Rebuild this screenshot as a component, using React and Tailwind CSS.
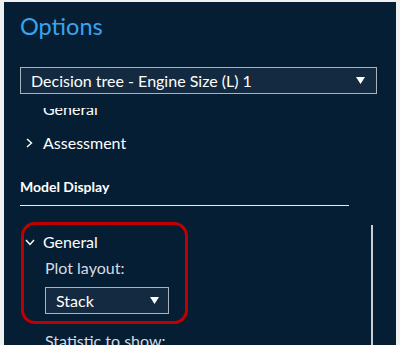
import React from "react";

const Caret = ({ className = "" }) => (
  <svg width="9" height="7" viewBox="0 0 9 7" className={className}>
    <path d="M0 0 H9 L4.5 7 Z" fill="#ffffff" />
  </svg>
);

const Chevron = ({ open }) => (
  <svg width="10" height="10" viewBox="0 0 10 10" className="shrink-0">
    <path
      d={open ? "M1 3 L5 7.5 L9 3" : "M3 1 L7.5 5 L3 9"}
      fill="none"
      stroke="#ffffff"
      strokeWidth="1.4"
    />
  </svg>
);

const Select = ({ label, className = "" }) => (
  <div
    className={`flex items-center justify-between border border-[#a9b3bd] bg-[#132a40] text-white ${className}`}
  >
    <span>{label}</span>
    <Caret />
  </div>
);

export default function App() {
  return (
    <div
      className="w-[400px] h-[345px] bg-[#eef0f2] pt-[2px] pl-[4px] pr-[4px] overflow-hidden"
      style={{ fontFamily: "Lato, 'Noto Sans', sans-serif" }}
    >
      <div className="relative h-full bg-[#061e34] overflow-hidden">
        <h1 className="pl-[16px] pt-[11px] text-[23.5px] leading-[26px] text-[#3ba3ec]">
          Options
        </h1>

        <Select
          label="Decision tree - Engine Size (L) 1"
          className="mt-[28px] ml-[16px] mr-[19px] h-[27px] pl-[10px] pr-[11px] text-[16px]"
        />

        {/* scrolled list: first row is partly hidden */}
        <div className="relative mt-[14px] h-[237px] overflow-hidden">
          <div className="absolute left-0 right-0 top-[-11px]">
            <div className="pl-[39px] h-[24px] text-[16px] leading-[24px] text-white">
              General
            </div>
            <div className="flex items-center gap-[9px] pl-[20px] mt-[10px] h-[24px] text-[16px] text-white">
              <Chevron />
              <span>Assessment</span>
            </div>
            <div className="mt-[23px] pl-[16px] text-[14px] font-bold text-white leading-[18px]">
              Model Display
            </div>
            <div className="mt-[9px] ml-[16px] w-[329px] h-px bg-[#e8ecf0]" />

            <div className="flex items-center gap-[8px] pl-[21px] mt-[25px] h-[22px] text-[16px] text-white">
              <Chevron open />
              <span>General</span>
            </div>
            <div className="pl-[41px] mt-[5px] text-[16px] leading-[20px] text-[#d4dbe2]">
              Plot layout:
            </div>
            <Select
              label="Stack"
              className="mt-[9px] ml-[41px] w-[124px] h-[27px] pl-[10px] pr-[9px] text-[16px]"
            />
            <div className="pl-[41px] mt-[17px] text-[16px] leading-[20px] text-[#d4dbe2]">
              Statistic to show:
            </div>
          </div>

          <div className="absolute right-[23px] top-[117px] bottom-0 w-[2px] bg-[#c9ced4]" />
        </div>

        <div className="absolute left-[17px] top-[220px] w-[167px] h-[102px] rounded-[14px] border-[3px] border-[#c00000]" />
      </div>
    </div>
  );
}
